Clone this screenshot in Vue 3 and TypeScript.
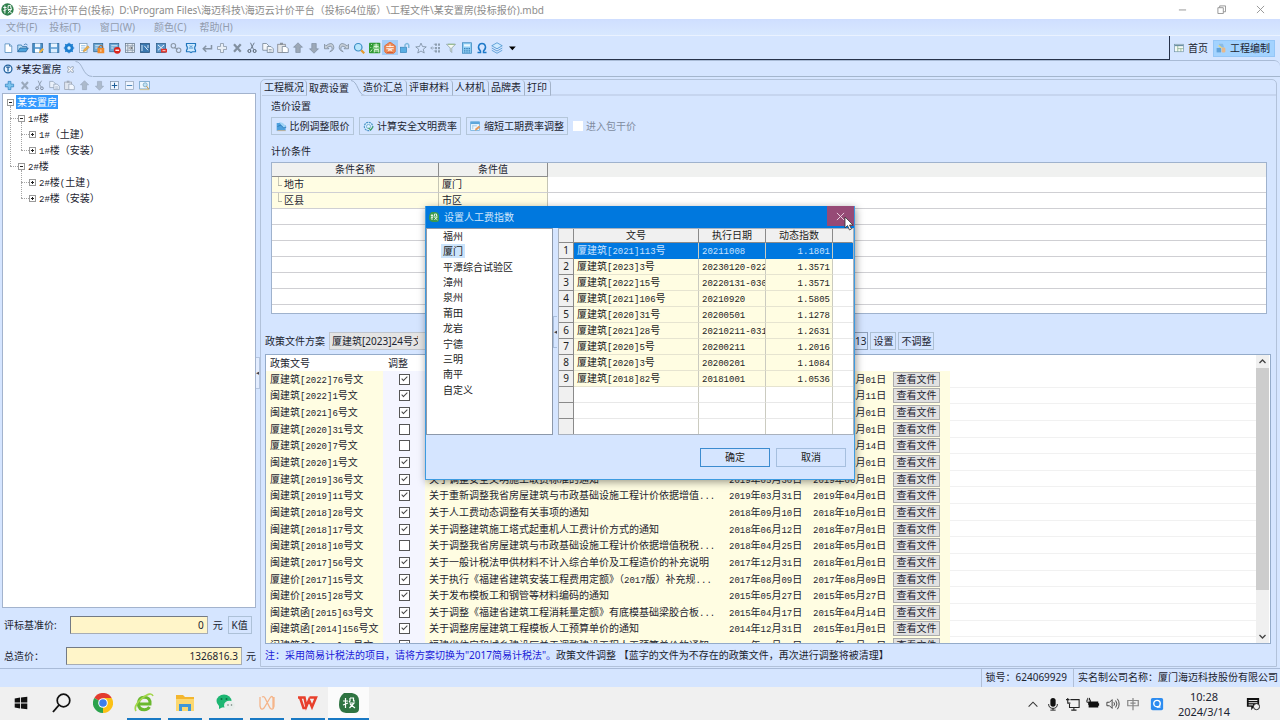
<script setup lang="ts">
import { h, ref } from 'vue'

interface Policy { no: string; on: boolean; name: string; issued: string; effective: string }
interface TreeNode { label: string; open: boolean; selected?: boolean; children?: TreeNode[] }

/* Sets half-width runs in a monospaced face beside the full-width characters. */
const Mixed = (props: { text: string }) =>
  props.text.split(/([\x21-\x7e]+)/).filter(Boolean).map(part =>
    /^[\x21-\x7e]/.test(part) ? h('span', { class: 'half' }, part) : h('span', part))
Mixed.props = ['text']

const icons: Record<string, string> = {
  page: '<path d="M4 2.500h6l3 3v8.500H4z" fill="#fff" stroke="#4a86b8"/><path d="M10 2.500v3h3" fill="none" stroke="#4a86b8"/>',
  open: '<path d="M1 13V4h5l1 2h6v2" fill="#bfe0f5" stroke="#2a6ea8"/><path d="M1 13l3-5h11l-3 5z" fill="#4da3dc" stroke="#1f5f96"/><path d="M9 4q3-3 5 0" fill="none" stroke="#2a6ea8"/>',
  saveas: '<rect x="1" y="2" width="13" height="12" fill="#4a90c8" stroke="#2b6698"/><rect x="4" y="2" width="7" height="5" fill="#e8f4ff"/><rect x="4" y="9" width="6" height="5" fill="#fff"/><path d="M9 15l1-3 4-4 2 2-4 4z" fill="#f0b040"/>',
  save: '<rect x="1.500" y="2" width="13" height="12" fill="#5b9bd0" stroke="#2f6b9e"/><rect x="4" y="2" width="8" height="5" fill="#e8f4ff"/><rect x="4" y="9" width="8" height="5" fill="#dceeff"/>',
  gear: '<circle cx="8" cy="8" r="4.200" fill="none" stroke="#1e7fd0" stroke-width="3.600"/><path d="M8 1v14M1 8h14M3 3l10 10M13 3L3 13" stroke="#1e7fd0" stroke-width="1.500"/><circle cx="8" cy="8" r="2.200" fill="#d6f0ff"/>',
  edit: '<rect x="2" y="2" width="10" height="12" fill="#fff" stroke="#7c9cb8"/><path d="M4 5h6M4 8h6M4 11h4" stroke="#6eaadc"/><path d="M7 13l1-3 5-5 2 2-5 5z" fill="#efb24c" stroke="#b57a20" stroke-width=".6"/>',
  lockdoc: '<rect x="1" y="2" width="12" height="11" fill="#6ca9d6" stroke="#2d648f"/><path d="M3 5h8M3 8h3" stroke="#fff"/><rect x="6" y="8" width="9" height="7" fill="#f08a2c"/><path d="M8 8V6q2.500-3 5 0v2" fill="none" stroke="#b85c10" stroke-width="1.300"/><path d="M10.500 10v3" stroke="#fff"/>',
  stopdoc: '<rect x="1" y="2" width="12" height="11" fill="#6ca9d6" stroke="#2d648f"/><path d="M3 5h8M3 8h3" stroke="#fff"/><circle cx="11" cy="11" r="4.500" fill="#d9251d"/><path d="M8.500 11h5" stroke="#fff" stroke-width="1.800"/>',
  film: '<rect x="2" y="2" width="12" height="12" fill="#e8eef5" stroke="#67788a"/><path d="M2 5h12M2 11h12M5 2v12M11 2v12" stroke="#8292a4"/><path d="M6 8h5l-2-2M11 8l-2 2" fill="none" stroke="#555"/>',
  filmblue: '<rect x="2" y="2" width="12" height="12" fill="#3a78b0" stroke="#234f7a"/><path d="M4 4v8M7 5l5 6M12 4v4" stroke="#dff0ff" stroke-width="1.300"/>',
  filmred: '<rect x="2" y="2" width="12" height="12" fill="#5b95c8" stroke="#2c5d88"/><path d="M4 4l8 7M12 4l-8 7" stroke="#e8f4ff" stroke-width="1.300"/><rect x="8" y="9" width="8" height="5" fill="#e0342c"/><path d="M10 11.500h4" stroke="#fff"/>',
  link: '<circle cx="4.500" cy="5" r="3" fill="none" stroke="#8d99a8" stroke-width="1.500"/><circle cx="11.500" cy="11" r="3" fill="none" stroke="#8d99a8" stroke-width="1.500"/><path d="M6 7l4 3" stroke="#8d99a8" stroke-width="1.500"/>',
  board: '<path d="M2 2h12v3l-1 1.500v3l1 1.500v2h-4l-2 1-2-1H2v-2l1-1.500v-3L2 5z" fill="#cfeaff" stroke="#2176bd" stroke-width="1.600"/><path d="M5 8h6M6 5l2 1 2-1" stroke="#2176bd" fill="none"/>',
  back: '<path d="M14 4v5H4M7 5L3 9l4 4" fill="none" stroke="#8694a5" stroke-width="2"/>',
  plus: '<path d="M6 2h4v4h4v4h-4v4H6v-4H2V6h4z" fill="#e9eff6" stroke="#8593a3"/>',
  plusblue: '<path d="M6 2h4v4h4v4h-4v4H6v-4H2V6h4z" fill="#7cc4ee" stroke="#2a7fbe"/>',
  cross: '<path d="M4 3l9 10M13 3L4 13" stroke="#8290a0" stroke-width="3"/>',
  cut: '<path d="M6 10L11 1M10 10L6 1" stroke="#6c7a8a" stroke-width="1.300"/><circle cx="4.500" cy="12" r="2" fill="none" stroke="#4d5966" stroke-width="1.300"/><circle cx="11.500" cy="12" r="2" fill="none" stroke="#4d5966" stroke-width="1.300"/>',
  copy: '<path d="M1 2h5l3 3v6H1z" fill="#f4f7fa" stroke="#6f7f90"/><path d="M7 6h5l3 3v5H7z" fill="#f4f7fa" stroke="#6f7f90"/><path d="M9 10h4M9 12h4" stroke="#8696a8"/>',
  paste: '<rect x="1" y="3" width="10" height="11" fill="#e4e6e8" stroke="#7b7f86"/><rect x="4" y="1" width="4" height="3" fill="#8d949e"/><path d="M7 6h5l3 3v5H7z" fill="#fff" stroke="#6f7f90"/>',
  up: '<path d="M8 1l6 6h-3v7H5V7H2z" fill="#9ca8b7" stroke="#6f7e90" stroke-width=".7"/>',
  down: '<path d="M8 15l6-6h-3V2H5v7H2z" fill="#9ca8b7" stroke="#6f7e90" stroke-width=".7"/>',
  undo: '<path d="M2 3v6h6L6 7q4-3 6 0t-3 6q7-2 5-8T4 5z" fill="#c5ced8" stroke="#788797"/>',
  redo: '<path d="M14 3v6H8l2-2q-4-3-6 0t3 6Q0 11 2 5t10 0z" fill="#c5ced8" stroke="#788797"/>',
  find: '<circle cx="7" cy="7" r="5" fill="#b9e6fb" stroke="#3a8dc4" stroke-width="1.600"/><path d="M11 11l4 4" stroke="#e69a2a" stroke-width="3"/>',
  clear: '<rect x="0" y="1" width="15" height="14" rx="1" fill="#2f9a33"/><path d="M3 3l1 1M2 7l1 1M2 13l2-3M6 4h7M6 6h7M5 8h9M9.500 2v6M7 14v-4h6v4M7 12h6" stroke="#e9ffe3" stroke-width="1.200" fill="none"/>',
  tint: '<path d="M8 0l7 5v8l-2 2H3l-2-2V5z" fill="#ee8a55" stroke="#e0622c"/><path d="M3 6h10M8 3v4M3 9h10M5 12l6-3M5 9l6 3" stroke="#fff" stroke-width="1.100"/><path d="M4 14h8" stroke="#d2502a"/>',
  unlock: '<rect x="2" y="7" width="8" height="7" fill="#59aee4" stroke="#3a88bd"/><path d="M8 7V4q3-4 5 0v4" fill="none" stroke="#7fb9dd" stroke-width="2"/>',
  star: '<path d="M8 1.500l2 4.500 5 .5-4 3.200 1.300 5L8 12l-4.300 2.700L5 9.700 1 6.500 6 6z" fill="none" stroke="#76879a"/>',
  columns: '<path d="M1 8h5M3 6L1 8l2 2" stroke="#8797a8" fill="none"/><path d="M8 2v12M12 2v12" stroke="#8797a8" stroke-width="2.400" stroke-dasharray="3 1.500"/><path d="M5 3h2M5 12h2" stroke="#8797a8"/>',
  filter: '<path d="M2 3h12L9 8v6l-2-2V8z" fill="#f6faf3" stroke="#849a9d"/><path d="M4 3h9" stroke="#88b86f"/>',
  calc: '<rect x="2" y="1" width="12" height="14" fill="#8fcdf3" stroke="#3a86bd"/><rect x="4" y="3" width="8" height="3" fill="#eaf8ff"/><path d="M5 8v6M8 8v6M11 8v6" stroke="#2b76b0" stroke-width="1.600" stroke-dasharray="1.400 1"/>',
  omega: '<path d="M2 14h4v-2Q2.500 9 3.500 5.500T8 2t4.500 3.500T10 12v2h4" fill="none" stroke="#1c78c8" stroke-width="2"/>',
  layers: '<path d="M8 1l7 4-7 4-7-4z" fill="#cfeaff" stroke="#3d8bca"/><path d="M1 8l7 4 7-4M1 11l7 4 7-4" fill="none" stroke="#3d8bca"/>',
  caret: '<path d="M4 6h9l-4.500 5z" fill="#000"/>',
  boxplus: '<rect x="2" y="2" width="12" height="12" fill="#eef5ff" stroke="#7a8ea5"/><path d="M4 8h8M8 4v8" stroke="#1d5e99" stroke-width="1.500"/>',
  boxminus: '<rect x="2" y="2" width="12" height="12" fill="#eef5ff" stroke="#8fa0b5"/><path d="M4 8h8" stroke="#4f87ba" stroke-width="1.500"/>',
  preview: '<rect x="1" y="2" width="14" height="11" fill="#eef8ff" stroke="#5b93bd"/><path d="M1 14h14" stroke="#e0c070"/><circle cx="9" cy="7" r="3" fill="#bfe3f5" stroke="#6e9bb8"/><path d="M11 9l3 4" stroke="#c49a52" stroke-width="1.500"/>',
  info: '<circle cx="8" cy="8" r="6.300" fill="#eaf5ff" stroke="#1f5f9c" stroke-width="2"/><path d="M5 5h6M8 5v7" stroke="#1f5f9c" stroke-width="2"/>',
  close: '<path d="M3 3h3l2 3 2-3h3v3l-3 2 3 2v3h-3L8 10l-2 3H3v-3l3-2-3-2z" fill="#fff" stroke="#6d7c90"/>',
  folder: '<path d="M1 3h6l1 3h6v8H1z" fill="#4ea0dd"/><path d="M4 1l6 2 4 4-2 4z" fill="#9fd3f5"/><path d="M2 8l5-2 4 4 4-1" stroke="#1f6fb0" fill="none"/><path d="M2 14h12" stroke="#e6b070"/>',
  gauge: '<circle cx="8" cy="8" r="6" fill="#dff2ff" stroke="#4b93c9" stroke-width="1.800" stroke-dasharray="3 1"/><circle cx="8" cy="8" r="3" fill="none" stroke="#4b93c9"/><path d="M8 10l3 3 4-5" fill="none" stroke="#45a35c" stroke-width="1.600"/>',
  form: '<rect x="1" y="1" width="13" height="13" fill="#eef8ff" stroke="#5aa5da"/><path d="M1 3h13" stroke="#5aa5da" stroke-width="3"/><path d="M4 6v6M4 7h6" stroke="#8cb8d8"/><path d="M7 14l1-3 5-4 2 2-5 4z" fill="#e59a5c"/>',
  grid: '<rect x="1" y="2" width="14" height="12" fill="#f4faf4" stroke="#6b8fa5"/><path d="M1 4h14" stroke="#6b8fa5" stroke-width="2"/><path d="M6 4v10M6 9h9M11 9v5" stroke="#74a07d"/>',
  blocks: '<path d="M5 1h6l2 6H5z" fill="#8bbbe4"/><rect x="1" y="8" width="7" height="7" fill="#62a3da"/><rect x="9" y="7" width="6" height="8" rx="2" fill="#e8b98a"/><path d="M4 4l5 4" stroke="#eed97a" stroke-width="2"/>',
}

const toolbar = ['page', 'open', 'saveas', 'save', 'gear', 'edit', 'lockdoc', 'stopdoc', 'film', 'filmblue', 'filmred', 'link', 'board', 'back', 'plus', 'cross', 'cut', 'copy', 'paste', 'up', 'down', 'undo', 'redo', 'find', 'clear', 'tint', 'unlock', 'star', 'columns', 'filter', 'calc', 'omega', 'layers', 'caret']
const treeTools = ['plusblue', 'cross', 'cut', 'copy', 'paste', 'up', 'down', 'boxplus', 'boxminus', 'preview']
const menus = ['文件(F)', '投标(T)', '窗口(W)', '颜色(C)', '帮助(H)']
const tabs = ['工程概况', '取费设置', '造价汇总', '评审材料', '人材机', '品牌表', '打印']
const activeTab = ref('取费设置')

const tree: TreeNode[] = [{
  label: '某安置房', open: true, selected: true, children: [
    { label: '1#楼', open: true, children: [{ label: '1#（土建）', open: false }, { label: '1#楼（安装）', open: false }] },
    { label: '2#楼', open: true, children: [{ label: '2#楼(土建)', open: false }, { label: '2#楼（安装）', open: false }] },
  ],
}]

const conditions = [['地市', '厦门'], ['区县', '市区']]

const p = (no: string, on: boolean, name: string, issued: string, effective: string): Policy => ({ no, on, name, issued, effective })
const policies = ref<Policy[]>([
  p('厦建筑[2022]76号文', true, '', '', '2022年12月01日'),
  p('闽建筑[2022]1号文', true, '', '', '2022年01月11日'),
  p('闽建筑[2021]6号文', true, '', '', '2021年04月01日'),
  p('厦建筑[2020]31号文', false, '', '', '2020年05月01日'),
  p('厦建筑[2020]7号文', false, '', '', '2020年02月14日'),
  p('闽建筑[2020]1号文', true, '', '', '2020年03月01日'),
  p('厦建筑[2019]36号文', true, '关于调整安全文明施工取费标准的通知', '2019年05月30日', '2019年06月01日'),
  p('闽建筑[2019]11号文', true, '关于重新调整我省房屋建筑与市政基础设施工程计价依据增值...', '2019年03月31日', '2019年04月01日'),
  p('闽建筑[2018]28号文', true, '关于人工费动态调整有关事项的通知', '2018年09月10日', '2018年10月01日'),
  p('闽建筑[2018]17号文', true, '关于调整建筑施工塔式起重机人工费计价方式的通知', '2018年06月12日', '2018年07月01日'),
  p('闽建筑[2018]10号文', false, '关于调整我省房屋建筑与市政基础设施工程计价依据增值税税...', '2018年04月25日', '2018年05月01日'),
  p('闽建筑[2017]56号文', true, '关于一般计税法甲供材料不计入综合单价及工程造价的补充说明', '2017年12月31日', '2018年01月01日'),
  p('厦建价[2017]15号文', true, '关于执行《福建省建筑安装工程费用定额》（2017版）补充规...', '2017年08月09日', '2017年08月09日'),
  p('闽建价[2015]28号文', true, '关于发布模板工和钢管等材料编码的通知', '2015年05月27日', '2015年05月27日'),
  p('闽建筑函[2015]63号文', true, '关于调整《福建省建筑工程消耗量定额》有底模基础梁胶合板...', '2015年04月17日', '2015年04月14日'),
  p('闽建筑函[2014]156号文', true, '关于调整房屋建筑工程模板人工预算单价的通知', '2014年12月31日', '2015年01月01日'),
  p('闽建筑函[2013]13号文', true, '福建省住房和城乡建设厅关于调整建设工程人工预算单价的通知', '2013年10月30日', '2014年01月01日'),
])

const regions = ['福州', '厦门', '平潭综合试验区', '漳州', '泉州', '莆田', '龙岩', '宁德', '三明', '南平', '自定义']
const region = ref('厦门')
const indices = [
  ['厦建筑[2021]113号', '20211008', '1.1801'],
  ['厦建筑[2023]3号', '20230120-022', '1.3571'],
  ['厦建筑[2022]15号', '20220131-030', '1.3571'],
  ['厦建筑[2021]106号', '20210920', '1.5805'],
  ['厦建筑[2020]31号', '20200501', '1.1278'],
  ['厦建筑[2021]28号', '20210211-031', '1.2631'],
  ['厦建筑[2020]5号', '20200211', '1.2016'],
  ['厦建筑[2020]3号', '20200201', '1.1084'],
  ['厦建筑[2018]82号', '20181001', '1.0536'],
]
const currentIndex = ref(0)
</script>

<template>
  <div class="window">
    <header class="titlebar">
      <svg class="logo" viewBox="0 0 20 20"><circle cx="10" cy="10" r="9.500" fill="#2f7f4b" /><path d="M6 4v12M3.500 7h5M3.500 12l5-2M11 4v4l-1 1M11 4h4v4h2M10.500 10h6l-6 6M11 11l6 5" fill="none" stroke="#fff" stroke-width="1.500" /></svg>
      <span class="caption">海迈云计价平台(投标)&nbsp; D:\Program Files\海迈科技\海迈云计价平台（投标64位版）\工程文件\某安置房(投标报价).mbd</span>
      <div class="winbtns">
        <button aria-label="最小化"><svg viewBox="0 0 10 10"><path d="M1 5.500h8" /></svg></button>
        <button aria-label="还原"><svg viewBox="0 0 10 10"><path d="M1 3h6v6.500H1zM3 3V1h6.500v6.500H7" /></svg></button>
        <button aria-label="关闭"><svg viewBox="0 0 10 10"><path d="M1 1l8 8M9 1L1 9" /></svg></button>
      </div>
    </header>

    <nav class="menubar"><button v-for="m in menus" :key="m">{{ m }}</button></nav>

    <div class="toolrow">
      <div class="tools">
        <div class="toolset">
          <button v-for="t in toolbar" :key="t" :class="{ lit: t === 'tint' }" :aria-label="t"><svg viewBox="0 0 16 16" v-html="icons[t]"></svg></button>
        </div>
      </div>
      <div class="views">
        <button><svg viewBox="0 0 16 16" v-html="icons.grid"></svg>首页</button>
        <button class="on"><svg viewBox="0 0 16 16" v-html="icons.blocks"></svg>工程编制</button>
      </div>
    </div>

    <div class="doctabs">
      <button class="doc"><svg viewBox="0 0 16 16" v-html="icons.info"></svg><span>*某安置房</span><svg class="x" viewBox="0 0 16 16" v-html="icons.close"></svg></button>
      <svg class="curve" viewBox="0 0 18 17"><path d="M0 .5C8 .5 7 16.500 18 16.500" /></svg>
      <span class="rest"></span>
    </div>

    <main class="work">
      <aside class="side">
        <div class="treetools">
          <button v-for="t in treeTools" :key="t" :aria-label="t"><svg viewBox="0 0 16 16" v-html="icons[t]"></svg></button>
        </div>
        <div class="tree">
          <ul>
            <li v-for="a in tree" :key="a.label">
              <div class="node"><i class="tog open"></i><span class="lbl sel">{{ a.label }}</span></div>
              <ul>
                <li v-for="b in a.children" :key="b.label">
                  <div class="node"><i class="tog open"></i><span class="lbl"><Mixed :text="b.label" /></span></div>
                  <ul>
                    <li v-for="c in b.children" :key="c.label">
                      <div class="node"><i class="tog"></i><span class="lbl"><Mixed :text="c.label" /></span></div>
                    </li>
                  </ul>
                </li>
              </ul>
            </li>
          </ul>
        </div>
        <div class="totals base">
          <label for="base">评标基准价:</label><input id="base" value="0"><span>元</span><button>K值</button>
        </div>
        <div class="totals sum">
          <label for="sum">总造价：</label><input id="sum" value="1326816.3"><span>元</span>
        </div>
      </aside>

      <div class="splitter"><span>◂</span></div>

      <section class="content">
        <nav class="tabs">
          <template v-for="t in tabs" :key="t">
            <button :class="{ active: t === activeTab }" @click="activeTab = t">{{ t }}</button>
            <svg v-if="t === activeTab" class="curve small" viewBox="0 0 14 16"><path d="M0 .5C7 1 7 15.500 14 15.500" /></svg>
          </template>
          <span class="rest"></span>
        </nav>

        <div class="settings">
          <h2>造价设置</h2>
          <div class="actions">
            <button class="w1"><svg viewBox="0 0 16 16" v-html="icons.folder"></svg>比例调整限价</button>
            <button class="w2"><svg viewBox="0 0 16 16" v-html="icons.gauge"></svg>计算安全文明费率</button>
            <button class="w2"><svg viewBox="0 0 16 16" v-html="icons.form"></svg>缩短工期费率调整</button>
            <label><input type="checkbox" disabled>进入包干价</label>
          </div>
          <h2>计价条件</h2>
          <div class="condbox">
            <table class="cond">
              <colgroup><col class="c1"><col class="c2"><col></colgroup>
              <thead><tr><th>条件名称</th><th>条件值</th><th></th></tr></thead>
              <tbody>
                <tr v-for="c in conditions" :key="c[0]" class="filled"><td class="name">{{ c[0] }}</td><td>{{ c[1] }}</td><td></td></tr>
                <tr v-for="n in 7" :key="n"><td colspan="3"></td></tr>
              </tbody>
            </table>
          </div>
        </div>

        <div class="scheme">
          <label for="scheme">政策文件方案</label>
          <select id="scheme"><option>厦建筑[2023]24号文</option></select>
          <span class="gap"></span>
          <button class="count">13</button>
          <button>设置</button>
          <button>不调整</button>
        </div>

        <div class="policybox">
          <div class="clip">
            <table class="policy">
              <colgroup><col class="p1"><col class="p2"><col class="p3"><col class="p4"><col class="p5"><col class="p6"><col></colgroup>
              <thead><tr><th>政策文号</th><th class="mid">调整</th><th></th><th></th><th>执行日期</th><th></th><th></th></tr></thead>
              <tbody>
                <tr v-for="r in policies" :key="r.no">
                  <td class="y"><Mixed :text="r.no" /></td>
                  <td class="chk"><input v-model="r.on" type="checkbox" :aria-label="r.no"></td>
                  <td class="y"><Mixed :text="r.name" /></td>
                  <td class="y"><Mixed :text="r.issued" /></td>
                  <td class="y"><Mixed :text="r.effective" /></td>
                  <td class="y act"><button>查看文件</button></td>
                  <td class="blank"></td>
                </tr>
              </tbody>
            </table>
          </div>
          <div class="scroll">
            <svg viewBox="0 0 13 13"><path d="M3.500 8l3-3 3 3" /></svg>
            <div class="thumb"></div>
            <div class="track"></div>
            <svg viewBox="0 0 13 13"><path d="M3.500 5l3 3 3-3" /></svg>
          </div>
        </div>
        <p class="note"><em>注：采用简易计税法的项目，请将方案切换为"2017简易计税法"。</em>政策文件调整 【蓝字的文件为不存在的政策文件，再次进行调整将被清理】</p>
      </section>
    </main>

    <footer class="status"><span>锁号：624069929</span><span>实名制公司名称：厦门海迈科技股份有限公司</span></footer>

    <div class="taskbar">
      <div class="apps">
        <button aria-label="开始"><svg viewBox="0 0 20 20"><path d="M3 5l6-1v5.500H3zM10 4l7-1v6.500h-7zM3 10.500h6V16l-6-1zM10 10.500h7V17l-7-1z" fill="#111" /></svg></button>
        <button aria-label="搜索"><svg viewBox="0 0 20 20"><circle cx="11.500" cy="7.500" r="6.300" fill="none" stroke="#111" stroke-width="1.700" /><path d="M7 12l-6 7" stroke="#111" stroke-width="1.900" /></svg></button>
        <button aria-label="Chrome"><svg viewBox="0 0 20 20"><path d="M10 10L1.300 5A10 10 0 0 1 18.700 5z" fill="#e33b2e" /><path d="M10 10l8.700-5A10 10 0 0 1 10 20z" fill="#fbc116" /><path d="M10 10v10A10 10 0 0 1 1.300 5z" fill="#2ba24c" /><path d="M10 5h8.700L14 11z" fill="#fbc116" /><circle cx="10" cy="10" r="4.800" fill="#fff" /><circle cx="10" cy="10" r="3.800" fill="#3b7ded" /></svg></button>
        <button class="run" aria-label="浏览器"><svg viewBox="0 0 20 20"><path d="M4.500 11H16q.5-6.500-5.500-6.700T4.300 11q.5 5.700 6 5.700 3.500 0 5.200-2.700" fill="none" stroke="#69b82e" stroke-width="3" /><path d="M2 18Q-1 13 8 5.500T19 3" fill="none" stroke="#a3d64a" stroke-width="1.700" /></svg></button>
        <button class="run" aria-label="文件管理器"><svg viewBox="0 0 20 20"><path d="M1 2h7l2 2h9v14H1z" fill="#f3b62f" /><path d="M1 6h18v12H1z" fill="#fcd870" /><path d="M4 18v-7h12v7h-3v-4H7v4z" fill="#3f97d8" /></svg></button>
        <button class="run" aria-label="微信"><svg viewBox="0 0 20 20"><ellipse cx="8" cy="8" rx="7.500" ry="6.500" fill="#1db672" /><path d="M3 12v4l4-2z" fill="#1db672" /><circle cx="5.500" cy="6" r="1" fill="#0d6f45" /><circle cx="10.500" cy="6" r="1" fill="#0d6f45" /><ellipse cx="13.500" cy="12.500" rx="5.500" ry="4.800" fill="#e9eeec" /><circle cx="12" cy="12" r=".8" fill="#6b7d75" /><circle cx="15.500" cy="12" r=".8" fill="#6b7d75" /></svg></button>
        <button class="run" aria-label="办公"><svg viewBox="0 0 20 20"><path d="M3 4v9q1 5 4 2l6-10q2-3 3 0v11M5 4q2-1 3 1l5 10q3 3 4-2V4" fill="none" stroke="#f5b58a" stroke-width="1.300" /></svg></button>
        <button class="run" aria-label="WPS"><svg viewBox="0 0 20 20"><path d="M0 4.500h6.500l1.800 9L11 7l3 7 4-9.500h-6.500M2 4.500L5.500 15h3" fill="none" stroke="#e8402c" stroke-width="2.500" /></svg></button>
        <button class="run front" aria-label="海迈云计价"><svg viewBox="0 0 20 20"><path d="M5 0h8q7 1 7 8v8q0 4-5 4H7q-7-1-7-8 0-9 5-12z" fill="#2f7442" /><path d="M6.500 5v10M4 8h5M4 12l5-2M11 5v3l-1 1M11 5h3.500v3H16M10.500 10H15l-4.500 5M11 11l5 4" fill="none" stroke="#fff" stroke-width="1.200" /></svg></button>
      </div>
      <div class="tray">
        <svg viewBox="0 0 16 16"><path d="M3 11l5-5 5 5" fill="none" stroke="#333" stroke-width="1.200" /></svg>
        <svg viewBox="0 0 16 16"><rect x="5" y="1" width="6" height="10" rx="3" fill="#111" /><path d="M3 8q0 5 5 5t5-5M8 13v2M5 15h6" fill="none" stroke="#111" /></svg>
        <svg viewBox="0 0 16 16"><path d="M2 1v6h3M5 3h10v9H4V8M9 12v3M6 15h6M0 3h4" fill="none" stroke="#222" stroke-width="1.200" /></svg>
        <svg viewBox="0 0 16 16"><path d="M3 5h11v2h1v3h-1v2H3z" fill="#111" /><path d="M1 3v3h4V3M2 1v3M4 1v3M3 6v3" stroke="#111" fill="none" /></svg>
        <svg viewBox="0 0 16 16"><path d="M1 6h3l3-3v10l-3-3H1zM9 6q1.500 2 0 4M11 4q3 4 0 8M13 2q4 6 0 12" fill="none" stroke="#333" /></svg>
        <svg viewBox="0 0 16 16"><path d="M2 4h12v6H2zM8 1v14M5 7h6" fill="none" stroke="#888" stroke-width="1.400" /></svg>
        <svg class="q" viewBox="0 0 16 16"><rect x="1" y="1" width="14" height="14" rx="2" fill="#2d8cf0" /><circle cx="8" cy="7.500" r="3.700" fill="none" stroke="#fff" stroke-width="1.600" /><path d="M8 11.500h4" stroke="#fff" stroke-width="1.500" /></svg>
        <div class="clock"><span>10:28</span><span>2024/3/14</span></div>
        <svg viewBox="0 0 16 16"><path d="M1 1h14v10H9l-3 4v-4H1z" fill="#111" /><path d="M3 4h10M3 6.500h10M3 9h5" stroke="#fff" /><circle cx="12" cy="11" r="3.500" fill="#f0f0f0" stroke="#111" /></svg>
      </div>
    </div>

    <div class="dialog" role="dialog" aria-label="设置人工费指数">
      <div class="dtitle">
        <svg class="logo" viewBox="0 0 20 20"><path d="M5 0h8q7 1 7 8v8q0 4-5 4H7q-7-1-7-8 0-9 5-12z" fill="#3c9a4c" /><path d="M6 4v12M3.500 7h5M3.500 12l5-2M11 4v4l-1 1M11 4h4v4h2M10.500 10h6l-6 6M11 11l6 5" fill="none" stroke="#fff" stroke-width="1.600" /></svg>
        <span>设置人工费指数</span>
        <button aria-label="关闭"><svg viewBox="0 0 10 10"><path d="M1 1l8 8M9 1L1 9" /></svg></button>
      </div>
      <div class="dbody">
        <ul class="regions">
          <li v-for="r in regions" :key="r"><button :class="{ on: r === region }" @click="region = r">{{ r }}</button></li>
        </ul>
        <div class="dsplit"><span>◂</span></div>
        <div class="idxbox">
          <table class="idx">
            <colgroup><col class="i0"><col class="i1"><col class="i2"><col class="i2"><col></colgroup>
            <thead><tr><th></th><th>文号</th><th>执行日期</th><th>动态指数</th><th></th></tr></thead>
            <tbody>
              <tr v-for="(r, i) in indices" :key="i" :class="{ cur: i === currentIndex }" @click="currentIndex = i">
                <th>{{ i + 1 }}</th><td><Mixed :text="r[0]" /></td><td><Mixed :text="r[1]" /></td><td class="num"><Mixed :text="r[2]" /></td><td class="blank"></td>
              </tr>
              <tr v-for="n in 3" :key="'e' + n" class="empty"><th></th><td></td><td></td><td></td><td></td></tr>
            </tbody>
          </table>
        </div>
      </div>
      <div class="dfoot"><button class="ok">确定</button><button>取消</button></div>
      <svg class="pointer" viewBox="0 0 10 15"><path d="M1 1v11l2.500-2.500L5.500 14l2-1-2-4H9z" fill="#fff" stroke="#333" stroke-width=".8" /></svg>
    </div>
  </div>
</template>

<style>
body { margin: 0; }
.half { font-family: "Liberation Mono", monospace; font-size: 9px; line-height: 1; }
</style>

<style scoped>
.window {
  position: relative; display: flex; flex-direction: column; height: 100vh; overflow: hidden;
  background: #d5e5ff; color: #1c2430; font: 10px/16px "Noto Sans", "Noto Sans CJK SC", sans-serif; white-space: nowrap;
}
button, input, select { font: inherit; color: inherit; margin: 0; padding: 0; border: 0; background: none; box-sizing: border-box; border-radius: 0; }
ul { list-style: none; margin: 0; padding: 0; }
table { border-collapse: separate; border-spacing: 0; table-layout: fixed; width: 100%; }
th, td { padding: 0; font-weight: normal; text-align: left; overflow: hidden; box-sizing: border-box; }
svg { display: block; flex: none; }

.titlebar { display: flex; align-items: center; height: 19px; background: #fff; color: #8b8b8b; flex: none; }
.titlebar .logo { width: 13px; height: 13px; margin: 0 4px 0 1px; }
.winbtns { display: flex; margin-left: auto; }
.winbtns button { width: 39px; height: 19px; display: grid; place-items: center; }
.winbtns svg { width: 9px; height: 9px; fill: none; stroke: #909090; stroke-width: 1; }

.menubar { display: flex; gap: 12px; height: 16px; padding-left: 6px; flex: none; color: #929cae; background: linear-gradient(#cfdeff, #d8e8ff); border-bottom: 1px solid #eaf2ff; }
.menubar button:nth-child(2), .menubar button:nth-child(3) { margin-right: 7px; }
.menubar button:nth-child(4) { margin-right: 1px; }

.toolrow { display: flex; height: 24px; flex: none; }
.tools { flex: 1; display: flex; align-items: center; border-right: 1px solid #26324a; border-bottom: 1px solid #26324a; }
.toolset { display: flex; width: 520px; }
.toolset button { flex: 1; display: grid; place-items: center; height: 15px; }
.toolset svg { width: 12px; height: 12px; }
.toolset .lit { background: #a5cdf8; }
.views { display: flex; align-items: center; gap: 3px; padding: 0 5px 0 2px; }
.views button { display: flex; align-items: center; gap: 4px; height: 17px; padding: 0 2px; }
.views .on { background: #a3d3ff; border: 1px solid #94c6f7; padding: 0 4px 0 2px; }
.views svg { width: 10px; height: 10px; }

.doctabs { display: flex; height: 17px; flex: none; border-top: 1px solid #a9bbd6; border-radius: 0 6px 0 0; box-sizing: border-box; }
.doc { display: flex; align-items: center; gap: 3px; padding-left: 3px; }
.doc svg { width: 10px; height: 10px; }
.doc .x { width: 9px; height: 9px; margin-left: 1px; }
.curve { width: 18px; height: 17px; fill: none; stroke: #9eb1cc; }
.doctabs .curve { height: 16px; }
.curve.small { width: 14px; height: 16px; margin-right: -4px; }
.rest { flex: 1; border-bottom: 1px solid #a4b6cd; }

.work { display: flex; flex: 1; min-height: 0; border-bottom: 1px solid #a9bbd8; }
.side { display: flex; flex-direction: column; width: 256px; padding-left: 2px; box-sizing: border-box; flex: none; }
.treetools { display: flex; height: 16px; align-items: center; }
.treetools button { width: 15px; height: 15px; display: grid; place-items: center; }
.treetools svg { width: 11px; height: 11px; }
.treetools button:nth-child(n+2):nth-child(-n+7) { opacity: .7; }
.tree { flex: 1; background: #fff; border: 1px solid #a3b3cd; padding-left: 3px; }
.tree li { position: relative; }
.tree ul ul { padding-left: 11px; }
.node { display: flex; align-items: center; gap: 3px; height: 16px; }
.tog { width: 7px; height: 7px; margin-left: 1px; box-sizing: border-box; border: 1px solid #9a9a9a; background: linear-gradient(#222, #222) center / 3px 1px no-repeat, linear-gradient(#222, #222) center / 1px 3px no-repeat, #fff; position: relative; }
.tog.open { background: linear-gradient(#222, #222) center / 3px 1px no-repeat, #fff; }
.tree ul ul > li::before { content: ""; position: absolute; left: -7px; top: 8px; width: 8px; border-top: 1px dotted #a5a5a5; }
.tree ul ul > li::after { content: ""; position: absolute; left: -7px; top: -4px; height: 12px; border-left: 1px dotted #a5a5a5; }
.tree ul ul > li:nth-child(2)::after { top: -40px; height: 48px; }
.tree ul ul ul > li:nth-child(2)::after { top: -8px; height: 16px; }
.lbl { line-height: 15px; }
.lbl.sel { background: #3399ff; color: #fff; line-height: 14px; margin-left: -1px; padding: 0 1px; }
.totals { display: flex; align-items: center; height: 34px; padding-left: 2px; gap: 5px; flex: none; box-sizing: border-box; }
.totals label { min-width: 50px; }
.totals input { height: 18px; width: 138px; margin-left: 8px; background: #fff5c9; border: 1px solid #a7adb5; border-top-color: #737a85; border-left-color: #737a85; text-align: right; padding-right: 3px; }
.totals button { width: 24px; height: 18px; line-height: 15px; border: 1px solid #adc1d8; }
.totals.sum { height: 26px; padding-top: 2px; gap: 4px; }
.totals.sum input { width: 176px; }

.splitter { width: 4px; display: flex; align-items: center; flex: none; }
.splitter span { width: 4px; height: 32px; line-height: 30px; font-size: 7px; color: #345; border: 1px solid #b5c6e0; border-left: 0; box-sizing: border-box; overflow: hidden; background: #e3edff; }

.content { display: flex; flex-direction: column; flex: 1; min-width: 0; margin: 2px 3px 1px 0; border: 1px solid #b2c2da; border-radius: 5px 5px 0 0; padding: 0 4px; }
.tabs { display: flex; height: 16px; margin: 0 -4px 0 -3px; flex: none; }
.tabs button { padding: 0 2px; border-right: 1px solid #a3b3c9; border-bottom: 1px solid #bccbe2; border-radius: 0 4px 0 0; line-height: 15px; }
.tabs button.active { border-right: 0; border-bottom: 0; }
.tabs svg ~ button { padding: 0 3px 0 2px; }
.tabs .rest { border-bottom: 2px solid #c6d5ef; }

.settings { padding: 0 1px 0 6px; }
h2 { margin: 0; font-size: 10px; font-weight: normal; line-height: 21px; }
.actions { display: flex; height: 18px; gap: 5px; margin-bottom: 6px; }
.actions button { display: flex; align-items: center; justify-content: center; gap: 3px; border: 1px solid #b4c6d9; line-height: 16px; }
.actions button svg { width: 11px; height: 11px; }
.actions .w1 { width: 83px; }
.actions .w2 { width: 102px; }
.actions label { display: flex; align-items: center; gap: 3px; color: #808ca0; line-height: 16px; }
.actions input { appearance: none; width: 10px; height: 10px; background: #fff; }
.condbox { background: #fff; border: 1px solid #9fb2cd; height: 150px; overflow: hidden; margin-right: 4px; }
.cond .c1 { width: 167px; }
.cond .c2 { width: 109px; }
.cond th { height: 14px; line-height: 13px; background: #f0f1f0; text-align: center; border-right: 1px solid #8d8d8d; border-bottom: 1px solid #8d8d8d; }
.cond th:last-child { border-color: #f0f1f0; }
.cond td { height: 16px; line-height: 15px; border-bottom: 1px solid #cfcfd3; }
.cond .filled td:nth-child(-n+2) { background-color: #fffde3; border-right: 1px solid #c5c5b5; padding-left: 3px; }
.cond .filled td.name:nth-child(1) { padding-left: 12px; background-image: linear-gradient(#b5b5a5, #b5b5a5), linear-gradient(#c8c8b8, #c8c8b8); background-size: 4px 1px, 1px 8px; background-repeat: no-repeat; background-position: 6px 8px, 6px 0; }

.scheme { display: flex; align-items: center; height: 18px; margin: 18px 0 4px; line-height: 16px; }
.scheme select { appearance: none; width: 104px; height: 18px; margin-left: 4px; padding: 0 14px 0 2px; border: 1px solid #c0c6ce; background: #e4e4e4; }
.scheme .gap { flex: 0 1 420px; }
.scheme button { height: 18px; line-height: 16px; border: 1px solid #adc0d4; padding: 0 2px; margin-right: 2px; }
.scheme .count { border-color: #8d9eb8; padding: 0 1px; }

.policybox { display: flex; flex: 1; min-height: 0; background: #fff; border: 1px solid #94abc9; margin-right: 1px; }
.clip { flex: 1; min-width: 0; overflow: hidden; }
.policy { height: 299px; }
.policy .p1 { width: 117px; }
.policy .p2 { width: 42px; }
.policy .p3 { width: 300px; }
.policy .p4 { width: 84px; }
.policy .p5 { width: 82px; }
.policy .p6 { width: 59px; }
.policy th { height: 16px; padding-left: 4px; line-height: 15px; }
.policy th.mid { text-align: center; padding: 0 12px 0 0; }
.policy td { padding-left: 4px; line-height: 15px; }
.policy td.y { background: #fffde2; }
.policy td.chk { background: #f4f5ff; padding: 0 0 0 16px; }
.policy td.chk input { display: block; appearance: none; width: 11px; height: 11px; border: 1px solid #555; background: #fff; position: relative; }
.policy td.chk input:checked::after { content: ""; position: absolute; left: 3px; top: 0; width: 2px; height: 5px; border: solid #444; border-width: 0 1px 1px 0; transform: rotate(45deg); }
.policy td.act { padding-left: 2px; }
.policy td.act button { display: block; width: 47px; height: 15px; line-height: 13px; background: #e1e1e1; border: 1px solid #adadad; text-align: center; }
.policy td.blank { border-bottom: 1px solid #f1f1f1; }
.scroll { width: 13px; display: flex; flex-direction: column; background: #f0f0f0; margin-right: 1px; }
.scroll svg { width: 13px; height: 13px; fill: none; stroke: #444; stroke-width: 1.300; }
.thumb { flex: 222; background: #cdcdcd; }
.track { flex: 40; }

.note { margin: 0; height: 22px; line-height: 23px; flex: none; overflow: hidden; }
.note em { font-style: normal; color: #2020d8; }

.status { display: flex; justify-content: flex-end; height: 18px; line-height: 17px; flex: none; }
.status span { padding: 0 2px 0 4px; border-left: 1px solid #b1bfd6; }
.status span:first-child { padding-right: 6px; }

.taskbar { display: flex; justify-content: space-between; height: 33px; background: #f0f0f0; flex: none; }
.apps { display: flex; }
.apps button { width: 41px; height: 33px; display: grid; place-items: center; border-bottom: 2px solid transparent; }
.apps svg { width: 20px; height: 20px; }
.apps button:first-child svg { width: 18px; height: 18px; }
.apps .run { background: linear-gradient(#1979c4, #1979c4) center bottom / 34px 2px no-repeat border-box; }
.apps .front { background: linear-gradient(#1979c4, #1979c4) center bottom / 41px 2px no-repeat border-box, #fbfbfb; }
.tray { display: flex; align-items: center; gap: 6px; padding-right: 20px; }
.tray svg { width: 14px; height: 14px; }
.tray .q { margin-left: 4px; }
.clock { display: flex; flex-direction: column; align-items: center; width: 64px; margin: 0 4px 0 2px; font-size: 11px; line-height: 15px; }

.dialog { position: absolute; left: 425px; top: 206px; width: 430px; box-sizing: border-box; background: #d5e5ff; border: 1px solid #3d9be0; border-top: 0; box-shadow: 1px 2px 8px rgba(0, 0, 0, .4); color: #222; }
.dtitle { display: flex; align-items: center; height: 22px; background: #0078de; color: #cfe6fb; }
.dtitle .logo { width: 10px; height: 10px; margin: 0 5px 0 3px; }
.dtitle button { width: 27px; height: 20px; margin-left: auto; background: #964a76; display: grid; place-items: center; align-self: flex-start; }
.dtitle button svg { width: 9px; height: 9px; fill: none; stroke: #f2dbe8; }
.dbody { display: flex; height: 207px; box-sizing: border-box; }
.regions { width: 127px; box-sizing: border-box; background: #fff; border: 1px solid #8c98aa; display: grid; grid-template-rows: repeat(11, 1fr); padding-bottom: 36px; }
.regions li { padding-left: 14px; min-height: 0; }
.regions button { padding: 0 2px; line-height: 14px; display: block; }
.regions .on { background: #cce4fb; }
.dsplit { width: 5px; display: flex; align-items: center; }
.dsplit span { width: 4px; height: 32px; line-height: 30px; font-size: 7px; color: #345; border: 1px solid #a9bfdd; border-right: 0; box-sizing: border-box; overflow: hidden; }
.idxbox { flex: 1; min-width: 0; overflow: hidden; background: #fff; border: 1px solid #a9b1bd; }
.idx .i0 { width: 15px; }
.idx .i1 { width: 125px; }
.idx .i2 { width: 67px; }
.idx th { height: 14px; line-height: 13px; background: #f0f0f0; border-right: 1px solid #8a8a8a; border-bottom: 1px solid #8a8a8a; text-align: center; }
.idx thead th:last-child { border-right-color: #f0f0f0; }
.idx tbody th, .idx td { height: 16px; line-height: 15px; }
.idx td { padding: 0 0 0 3px; background: #fffde2; border-right: 1px solid #cbcbc0; border-bottom: 1px solid #e6e4d0; }
.idx td.num { text-align: right; padding-right: 2px; }
.idx td.blank, .idx .empty td { background: #fff; border-bottom-color: #e8e8e8; }
.idx td:last-child { border-right: 0; }
.idx .cur td { background: #0078e0; color: #c8e2ff; border-bottom-color: #0078e0; }
.dfoot { display: flex; justify-content: flex-end; gap: 6px; padding: 13px 8px 12px 0; }
.dfoot button { width: 70px; height: 19px; line-height: 17px; border: 1px solid #a6bfde; }
.dfoot .ok { border-color: #3c8cd0; }
.pointer { position: absolute; left: 418px; top: 10px; width: 10px; height: 15px; }
</style>
